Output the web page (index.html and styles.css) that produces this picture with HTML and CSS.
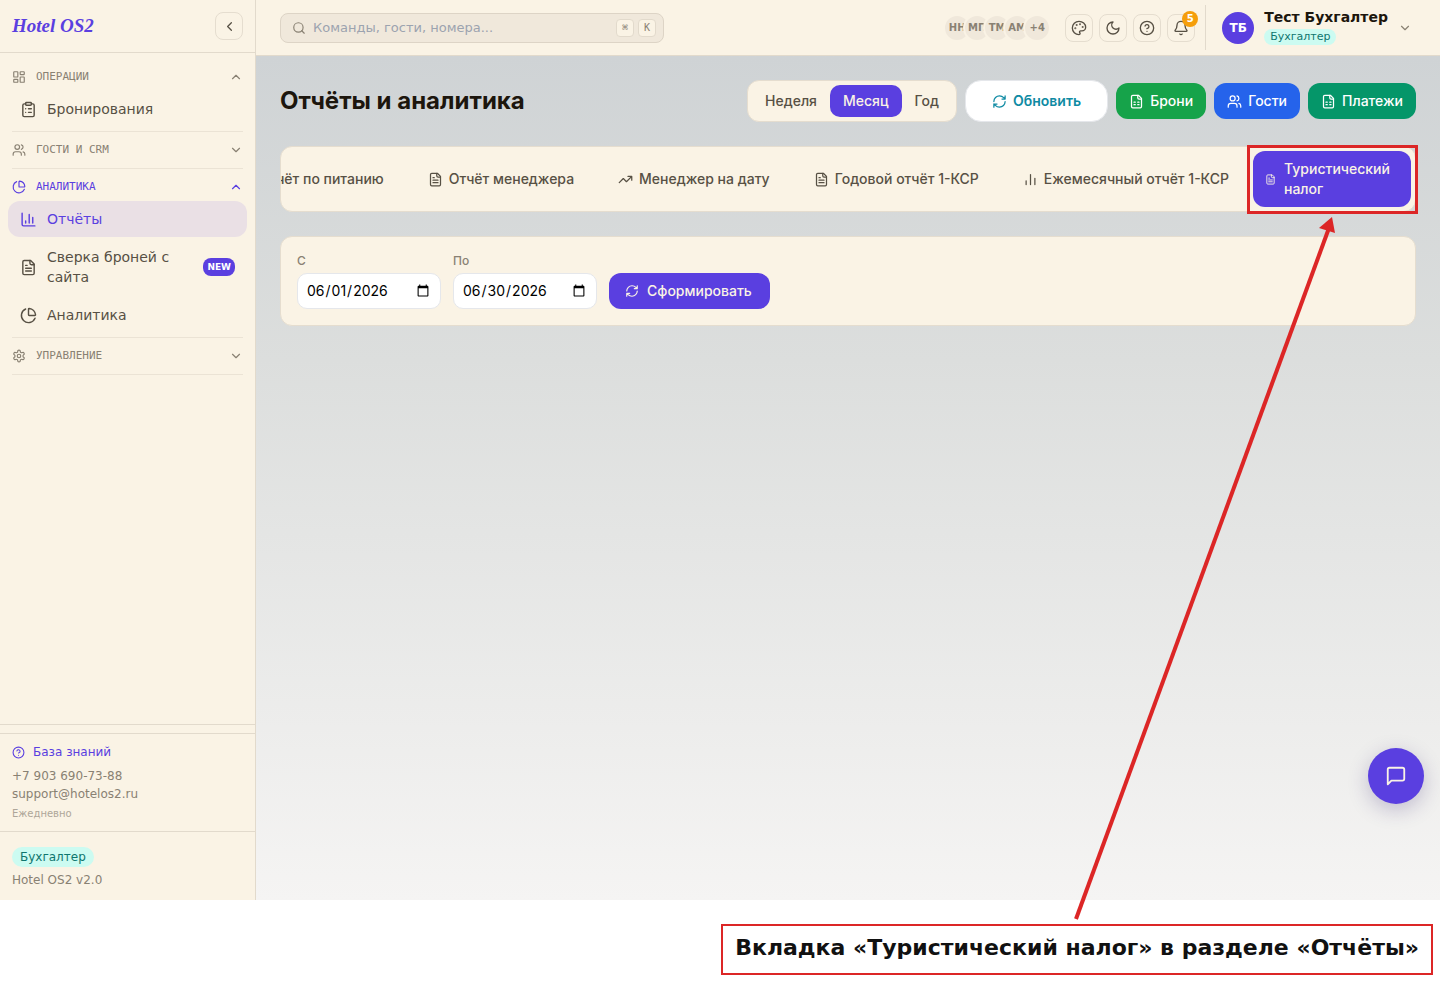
FILE: index.html
```html
<!DOCTYPE html>
<html lang="ru">
<head>
  <meta charset="UTF-8">
  <meta name="viewport" content="width=device-width, initial-scale=1">
  <title>Hotel OS2</title>
  <link rel="stylesheet" href="styles.css">
</head>
<body>
  <!-- icon set -->
  <svg class="sprite" aria-hidden="true">
    <symbol id="i-left" viewBox="0 0 24 24"><path d="m15 18-6-6 6-6"/></symbol>
    <symbol id="i-up" viewBox="0 0 24 24"><path d="m18 15-6-6-6 6"/></symbol>
    <symbol id="i-down" viewBox="0 0 24 24"><path d="m6 9 6 6 6-6"/></symbol>
    <symbol id="i-dashboard" viewBox="0 0 24 24"><rect x="3" y="3" width="7" height="9" rx="1"/><rect x="14" y="3" width="7" height="5" rx="1"/><rect x="14" y="12" width="7" height="9" rx="1"/><rect x="3" y="16" width="7" height="5" rx="1"/></symbol>
    <symbol id="i-clipboard" viewBox="0 0 24 24"><rect x="8" y="2" width="8" height="4" rx="1"/><path d="M16 4h2a2 2 0 0 1 2 2v14a2 2 0 0 1-2 2H6a2 2 0 0 1-2-2V6a2 2 0 0 1 2-2h2M12 11h4M12 16h4M8 11h.01M8 16h.01"/></symbol>
    <symbol id="i-users" viewBox="0 0 24 24"><path d="M16 21v-2a4 4 0 0 0-4-4H6a4 4 0 0 0-4 4v2"/><circle cx="9" cy="7" r="4"/><path d="M22 21v-2a4 4 0 0 0-3-3.870M16 3.130a4 4 0 0 1 0 7.750"/></symbol>
    <symbol id="i-pie" viewBox="0 0 24 24"><path d="M21 12c.552 0 1.005-.449.950-.998a10 10 0 0 0-8.953-8.951c-.550-.055-.998.398-.998.950v8a1 1 0 0 0 1 1z"/><path d="M21.210 15.890A10 10 0 1 1 8 2.830"/></symbol>
    <symbol id="i-chart" viewBox="0 0 24 24"><path d="M3 3v16a2 2 0 0 0 2 2h16M18 17V9M13 17V5M8 17v-3"/></symbol>
    <symbol id="i-file" viewBox="0 0 24 24"><path d="M15 2H6a2 2 0 0 0-2 2v16a2 2 0 0 0 2 2h12a2 2 0 0 0 2-2V7Z"/><path d="M14 2v4a2 2 0 0 0 2 2h4M10 9H8M16 13H8M16 17H8"/></symbol>
    <symbol id="i-sheet" viewBox="0 0 24 24"><path d="M15 2H6a2 2 0 0 0-2 2v16a2 2 0 0 0 2 2h12a2 2 0 0 0 2-2V7Z"/><path d="M14 2v4a2 2 0 0 0 2 2h4M8 13h2M14 13h2M8 17h2M14 17h2"/></symbol>
    <symbol id="i-gear" viewBox="0 0 24 24"><path d="M12.220 2h-.440a2 2 0 0 0-2 2v.180a2 2 0 0 1-1 1.730l-.430.250a2 2 0 0 1-2 0l-.150-.080a2 2 0 0 0-2.730.730l-.220.380a2 2 0 0 0 .730 2.730l.150.100a2 2 0 0 1 1 1.720v.510a2 2 0 0 1-1 1.740l-.150.090a2 2 0 0 0-.730 2.730l.220.380a2 2 0 0 0 2.730.730l.150-.080a2 2 0 0 1 2 0l.430.250a2 2 0 0 1 1 1.730V20a2 2 0 0 0 2 2h.440a2 2 0 0 0 2-2v-.180a2 2 0 0 1 1-1.730l.430-.250a2 2 0 0 1 2 0l.150.080a2 2 0 0 0 2.730-.730l.220-.390a2 2 0 0 0-.730-2.730l-.150-.080a2 2 0 0 1-1-1.740v-.500a2 2 0 0 1 1-1.740l.150-.090a2 2 0 0 0 .730-2.730l-.220-.380a2 2 0 0 0-2.730-.730l-.150.080a2 2 0 0 1-2 0l-.430-.250a2 2 0 0 1-1-1.730V4a2 2 0 0 0-2-2z"/><circle cx="12" cy="12" r="3"/></symbol>
    <symbol id="i-help" viewBox="0 0 24 24"><circle cx="12" cy="12" r="10"/><path d="M9.090 9a3 3 0 0 1 5.830 1c0 2-3 3-3 3M12 17h.01"/></symbol>
    <symbol id="i-search" viewBox="0 0 24 24"><circle cx="11" cy="11" r="8"/><path d="m21 21-4.300-4.300"/></symbol>
    <symbol id="i-palette" viewBox="0 0 24 24"><path d="M12 2C6.500 2 2 6.500 2 12s4.500 10 10 10c.926 0 1.648-.746 1.648-1.688 0-.437-.180-.835-.437-1.125-.290-.289-.438-.652-.438-1.125a1.640 1.640 0 0 1 1.668-1.668h1.996c3.051 0 5.555-2.503 5.555-5.554C21.965 6.012 17.461 2 12 2z"/><circle class="dot" cx="13.500" cy="6.500" r=".5"/><circle class="dot" cx="17.500" cy="10.500" r=".5"/><circle class="dot" cx="8.500" cy="7.500" r=".5"/><circle class="dot" cx="6.500" cy="12.500" r=".5"/></symbol>
    <symbol id="i-moon" viewBox="0 0 24 24"><path d="M12 3a6 6 0 0 0 9 9 9 9 0 1 1-9-9Z"/></symbol>
    <symbol id="i-bell" viewBox="0 0 24 24"><path d="M10.268 21a2 2 0 0 0 3.464 0M3.262 15.326A1 1 0 0 0 4 17h16a1 1 0 0 0 .740-1.673C19.410 13.956 18 12.499 18 8A6 6 0 0 0 6 8c0 4.499-1.411 5.956-2.738 7.326"/></symbol>
    <symbol id="i-refresh" viewBox="0 0 24 24"><path d="M3 12a9 9 0 0 1 9-9 9.750 9.750 0 0 1 6.740 2.740L21 8M21 3v5h-5M21 12a9 9 0 0 1-9 9 9.750 9.750 0 0 1-6.740-2.740L3 16M8 16H3v5"/></symbol>
    <symbol id="i-trend" viewBox="0 0 24 24"><path d="M22 7 13.500 15.500 8.500 10.500 2 17M16 7h6v6"/></symbol>
    <symbol id="i-bars" viewBox="0 0 24 24"><path d="M19 20V10M12 20V4M5 20v-6"/></symbol>
    <symbol id="i-chat" viewBox="0 0 24 24"><path d="M21 15a2 2 0 0 1-2 2H7l-4 4V5a2 2 0 0 1 2-2h14a2 2 0 0 1 2 2z"/></symbol>
  </svg>

  <div class="app">
    <aside class="sidebar">
      <div class="brand-row">
        <a class="brand" href="#">Hotel OS2</a>
        <button class="icon-btn" type="button" aria-label="Свернуть меню"><svg class="icon"><use href="#i-left"/></svg></button>
      </div>
      <nav class="nav">
        <div class="section">
          <button class="section-head" type="button"><svg class="icon icon-sm"><use href="#i-dashboard"/></svg><span>ОПЕРАЦИИ</span><svg class="icon icon-sm"><use href="#i-up"/></svg></button>
          <a class="nav-item" href="#"><svg class="icon icon-lg"><use href="#i-clipboard"/></svg><span>Бронирования</span></a>
        </div>
        <div class="section">
          <button class="section-head" type="button"><svg class="icon icon-sm"><use href="#i-users"/></svg><span>ГОСТИ И CRM</span><svg class="icon icon-sm"><use href="#i-down"/></svg></button>
        </div>
        <div class="section">
          <button class="section-head current" type="button"><svg class="icon icon-sm"><use href="#i-pie"/></svg><span>АНАЛИТИКА</span><svg class="icon icon-sm"><use href="#i-up"/></svg></button>
          <a class="nav-item active" href="#"><svg class="icon icon-lg"><use href="#i-chart"/></svg><span>Отчёты</span></a>
          <a class="nav-item" href="#"><svg class="icon icon-lg"><use href="#i-file"/></svg><span>Сверка броней с сайта</span><b class="new">NEW</b></a>
          <a class="nav-item" href="#"><svg class="icon icon-lg"><use href="#i-pie"/></svg><span>Аналитика</span></a>
        </div>
        <div class="section">
          <button class="section-head" type="button"><svg class="icon icon-sm"><use href="#i-gear"/></svg><span>УПРАВЛЕНИЕ</span><svg class="icon icon-sm"><use href="#i-down"/></svg></button>
        </div>
      </nav>
      <div class="support">
        <a class="kb" href="#"><svg class="icon icon-help"><use href="#i-help"/></svg>База знаний</a>
        <a href="tel:+79036907388">+7 903 690-73-88</a>
        <a href="mailto:support@hotelos2.ru">support@hotelos2.ru</a>
        <small>Ежедневно</small>
      </div>
      <div class="version">
        <span class="role">Бухгалтер</span>
        <div>Hotel OS2 v2.0</div>
      </div>
    </aside>

    <div class="content">
      <header class="topbar">
        <label class="search">
          <svg class="icon icon-sm"><use href="#i-search"/></svg>
          <input type="text" placeholder="Команды, гости, номера..." aria-label="Поиск">
          <kbd>⌘</kbd><kbd>K</kbd>
        </label>
        <div class="online">
          <span>НН</span><span>МП</span><span>ТМ</span><span>АМ</span><span>+4</span>
        </div>
        <div class="tools">
          <button class="icon-btn" type="button" aria-label="Тема"><svg class="icon icon-md"><use href="#i-palette"/></svg></button>
          <button class="icon-btn" type="button" aria-label="Тёмный режим"><svg class="icon icon-md"><use href="#i-moon"/></svg></button>
          <button class="icon-btn" type="button" aria-label="Помощь"><svg class="icon icon-md"><use href="#i-help"/></svg></button>
          <button class="icon-btn" type="button" aria-label="Уведомления"><svg class="icon icon-md"><use href="#i-bell"/></svg><b class="count">5</b></button>
        </div>
        <button class="user" type="button">
          <span class="avatar">ТБ</span>
          <span class="user-info"><b>Тест Бухгалтер</b><span class="role role-sm">Бухгалтер</span></span>
          <svg class="icon icon-sm"><use href="#i-down"/></svg>
        </button>
      </header>

      <main class="main">
        <div class="page-head">
          <h1>Отчёты и аналитика</h1>
          <div class="period">
            <button type="button">Неделя</button>
            <button class="active" type="button">Месяц</button>
            <button type="button">Год</button>
          </div>
          <button class="btn btn-refresh" type="button"><svg class="icon"><use href="#i-refresh"/></svg>Обновить</button>
          <button class="btn btn-green" type="button"><svg class="icon"><use href="#i-sheet"/></svg>Брони</button>
          <button class="btn btn-blue" type="button"><svg class="icon"><use href="#i-users"/></svg>Гости</button>
          <button class="btn btn-teal" type="button"><svg class="icon"><use href="#i-sheet"/></svg>Платежи</button>
        </div>

        <div class="tabs-wrap">
          <div class="tabs">
            <button class="tab" type="button"><svg class="icon"><use href="#i-file"/></svg>Отчёт по питанию</button>
            <button class="tab" type="button"><svg class="icon"><use href="#i-file"/></svg>Отчёт менеджера</button>
            <button class="tab" type="button"><svg class="icon"><use href="#i-trend"/></svg>Менеджер на дату</button>
            <button class="tab" type="button"><svg class="icon"><use href="#i-file"/></svg>Годовой отчёт 1-КСР</button>
            <button class="tab" type="button"><svg class="icon"><use href="#i-bars"/></svg>Ежемесячный отчёт 1-КСР</button>
            <button class="tab active" type="button"><svg class="icon"><use href="#i-file"/></svg>Туристический налог</button>
          </div>
          <div class="mark"></div>
        </div>

        <form class="filter">
          <div class="field"><label for="from">С</label><input id="from" type="date" value="2026-06-01"></div>
          <div class="field"><label for="to">По</label><input id="to" type="date" value="2026-06-30"></div>
          <button class="btn btn-primary" type="button"><svg class="icon icon-sm"><use href="#i-refresh"/></svg>Сформировать</button>
        </form>
      </main>
      <button class="chat" type="button" aria-label="Чат"><svg class="icon"><use href="#i-chat"/></svg></button>
    </div>
  </div>

  <div class="caption">Вкладка «Туристический налог» в разделе «Отчёты»</div>
  <svg class="arrow" viewBox="0 0 264 704" aria-hidden="true"><path class="line" d="M4 703 257 12"/><path class="head" d="M260 1 263 17 247 12z"/></svg>
</body>
</html>
```
FILE: styles.css
```css
* {
  box-sizing: border-box;
}
body {
  position: relative;
  display: flex;
  flex-direction: column;
  min-height: 100vh;
  margin: 0;
  background: #fff;
  font: 14px/20px "DejaVu Sans", sans-serif;
  color: #1c160d;
}
a {
  color: inherit;
  text-decoration: none;
}
button {
  padding: 0;
  border: 0;
  background: none;
  font: inherit;
  color: inherit;
  cursor: pointer;
}
.sprite {
  position: absolute;
  width: 0;
  height: 0;
}
.icon {
  flex: none;
  width: 15px;
  height: 15px;
  fill: none;
  stroke: currentColor;
  stroke-width: 2;
  stroke-linecap: round;
  stroke-linejoin: round;
}
.icon-sm {
  width: 14px;
  height: 14px;
}
.icon-md {
  width: 16px;
  height: 16px;
}
.icon-lg {
  width: 17px;
  height: 17px;
}
.icon-help {
  width: 13px;
  height: 13px;
}
.dot {
  fill: currentColor;
}
.app {
  display: flex;
  flex: 1;
}

/* sidebar */
.sidebar {
  display: flex;
  flex: none;
  flex-direction: column;
  width: 256px;
  border-right: 1px solid #e2dacc;
  background: #faf3e5;
}
.brand-row {
  display: flex;
  align-items: center;
  justify-content: space-between;
  padding: 12px;
  border-bottom: 1px solid #e2dacc;
}
.brand {
  font: italic bold 19px/28px "Liberation Serif", serif;
  color: #5a3fe0;
}
.icon-btn {
  position: relative;
  display: flex;
  align-items: center;
  justify-content: center;
  width: 28px;
  height: 28px;
  border: 1px solid #e5ddcf;
  border-radius: 8px;
  color: #575044;
}
.nav {
  flex: 1;
  padding: 6px 8px;
  border-bottom: 1px solid #e2dacc;
}
.section {
  display: flex;
  flex-direction: column;
  margin: 0 4px;
  padding: 4px 0;
  border-bottom: 1px solid #ebe3d5;
}
.section-head {
  display: flex;
  align-items: center;
  gap: 10px;
  height: 28px;
  font: 11px/16px "DejaVu Sans Mono", monospace;
  color: #898173;
}
.section-head span {
  flex: 1;
  text-align: left;
}
.section-head.current {
  color: #5a3fe0;
}
.nav-item {
  display: flex;
  align-items: center;
  gap: 10px;
  margin: 0 -4px;
  padding: 8px 12px;
  border-radius: 12px;
  color: #575044;
}
.nav-item + .nav-item {
  margin-top: 2px;
}
.nav-item span {
  flex: 1;
}
.nav-item.active {
  background: #eae0e5;
  color: #5a3fe0;
}
.new {
  padding: 0 4px;
  border-radius: 8px;
  background: #5a3fe0;
  font-size: 9px;
  line-height: 18px;
  color: #fff;
}
.support {
  display: flex;
  flex-direction: column;
  margin-top: 8px;
  padding: 9px 12px 8px;
  border-top: 1px solid #e2dacc;
  font-size: 12px;
  line-height: 18px;
  color: #898173;
}
.support small {
  margin-top: 2px;
  font-size: 10px;
  color: #aea699;
}
.kb {
  display: flex;
  align-items: center;
  gap: 8px;
  margin-bottom: 6px;
  color: #5a3fe0;
}
.version {
  padding: 15px 12px 10px;
  border-top: 1px solid #e2dacc;
  font-size: 12px;
  line-height: 20px;
  color: #898173;
}
.version div {
  margin-top: 3px;
}
.role {
  display: inline-block;
  padding: 0 8px;
  border-radius: 10px;
  background: #ccfbf1;
  color: #0f766e;
}
.role-sm {
  padding: 0 6px;
  font-size: 11px;
  line-height: 16px;
}

/* top bar */
.content {
  position: relative;
  display: flex;
  flex: 1;
  flex-direction: column;
  min-width: 0;
  background: linear-gradient(#cfd3d5 56px, #dcdedd 40%, #f5f4f3);
}
.topbar {
  display: flex;
  align-items: center;
  height: 56px;
  padding: 0 24px;
  border-bottom: 1px solid #e2dacc;
  background: #faf3e5;
}
.search {
  display: flex;
  align-items: center;
  gap: 4px;
  width: 384px;
  height: 30px;
  margin-right: auto;
  padding: 0 7px 0 11px;
  border: 1px solid #ddd4c6;
  border-radius: 8px;
  background: #f0e8db;
  color: #898173;
}
.search input {
  flex: 1;
  min-width: 0;
  padding: 0 0 0 3px;
  border: 0;
  outline: 0;
  background: none;
  font: 13px/20px "DejaVu Sans", sans-serif;
}
.search input::placeholder {
  color: #9ca3af;
}
kbd {
  width: 18px;
  height: 18px;
  border: 1px solid #e2dacc;
  border-radius: 4px;
  background: #faf3e5;
  font: 10px/16px "DejaVu Sans Mono", monospace;
  text-align: center;
}
.online {
  display: flex;
  margin-right: 14px;
}
.online span {
  width: 28px;
  height: 28px;
  margin-left: -8px;
  border: 2px solid #faf3e5;
  border-radius: 50%;
  background: #f0e8db;
  font-size: 10px;
  font-weight: bold;
  line-height: 24px;
  text-align: center;
  color: #898173;
}
.tools {
  display: flex;
  gap: 6px;
}
.count {
  position: absolute;
  top: -4px;
  right: -4px;
  width: 16px;
  height: 16px;
  border-radius: 50%;
  background: #f59e0b;
  font-size: 10px;
  line-height: 16px;
  color: #fff;
}
.user {
  display: flex;
  align-items: center;
  gap: 10px;
  height: 45px;
  margin-left: 10px;
  padding: 0 4px 0 16px;
  border-left: 1px solid #e2dacc;
}
.user .icon {
  color: #898173;
}
.avatar {
  width: 32px;
  border-radius: 50%;
  background: #5a3fe0;
  font-size: 12px;
  font-weight: bold;
  line-height: 32px;
  color: #fff;
}
.user-info {
  display: flex;
  flex-direction: column;
  align-items: flex-start;
  gap: 2px;
  padding-bottom: 3px;
}

/* page */
.main {
  display: flex;
  flex-direction: column;
  gap: 24px;
  padding: 24px;
  font-family: Inter, sans-serif;
  font-weight: 500;
}
.page-head {
  display: flex;
  align-items: center;
  gap: 8px;
}
h1 {
  margin: 0 auto 0 0;
  font-size: 24px;
  line-height: 32px;
}
.period {
  display: flex;
  padding: 4px;
  border: 1px solid #e5ddcf;
  border-radius: 12px;
  background: #faf3e5;
  color: #575044;
}
.period button {
  padding: 6px 13px;
  border-radius: 10px;
}
.period .active {
  background: #5a3fe0;
  color: #faf3e5;
}
.btn {
  display: flex;
  align-items: center;
  gap: 6px;
  height: 36px;
  padding: 0 13px;
  border-radius: 12px;
  color: #fff;
}
.btn-refresh {
  height: 42px;
  padding: 0 26px;
  border: 1px solid #e5e7eb;
  border-radius: 16px;
  background: #fff;
  font-weight: 600;
  color: #0e8aa3;
}
.btn-green {
  background: #16a34a;
}
.btn-blue {
  background: #2563eb;
}
.btn-teal {
  background: #059669;
}
.btn-primary {
  gap: 8px;
  padding: 0 18px 0 16px;
  background: #5a3fe0;
  color: #faf3e5;
}
.tabs-wrap {
  position: relative;
}
.tabs {
  display: flex;
  align-items: center;
  justify-content: flex-end;
  gap: 4px;
  padding: 4px;
  border: 1px solid #e5ddcf;
  border-radius: 12px;
  background: #faf3e5;
  overflow: hidden;
}
.tab {
  display: flex;
  flex: none;
  align-items: center;
  gap: 6px;
  padding: 8px 20px;
  border-radius: 12px;
  color: #575044;
  white-space: nowrap;
}
.tab.active {
  gap: 8px;
  width: 158px;
  padding: 8px 12px;
  background: #5a3fe0;
  color: #faf3e5;
  text-align: left;
  white-space: normal;
}
.tab.active .icon {
  width: 11px;
  height: 11px;
}
.filter {
  display: flex;
  align-items: flex-end;
  gap: 12px;
  padding: 16px;
  border: 1px solid #e5ddcf;
  border-radius: 12px;
  background: #faf3e5;
}
.field {
  display: flex;
  flex-direction: column;
  gap: 4px;
}
.field label {
  font-size: 12px;
  line-height: 16px;
  color: #898173;
}
.field input {
  width: 144px;
  height: 36px;
  padding: 0 8px;
  border: 1px solid #e5e7eb;
  border-radius: 10px;
  background: #fff;
  font: 14px/20px Inter, sans-serif;
  color: #000;
}
.chat {
  position: absolute;
  right: 16px;
  bottom: 96px;
  display: flex;
  align-items: center;
  justify-content: center;
  width: 56px;
  height: 56px;
  border-radius: 50%;
  background: #5a3fe0;
  box-shadow: 0 6px 20px rgba(50, 35, 110, .25);
  color: #faf3e5;
}
.chat .icon {
  width: 22px;
  height: 22px;
}

/* callout */
.mark {
  position: absolute;
  top: -1px;
  right: -2px;
  width: 171px;
  height: 69px;
  border: 3px solid #dc2626;
}
.arrow {
  position: absolute;
  top: 216px;
  right: 104px;
  width: 264px;
  height: 704px;
}
.line {
  fill: none;
  stroke: #dc2626;
  stroke-width: 4;
}
.head {
  fill: #dc2626;
}
.caption {
  align-self: flex-end;
  margin: 24px 7px 23px;
  padding: 0 12px 4px;
  border: 2px solid #dc2626;
  font-size: 22px;
  font-weight: bold;
  line-height: 43px;
  color: #111;
}
```
